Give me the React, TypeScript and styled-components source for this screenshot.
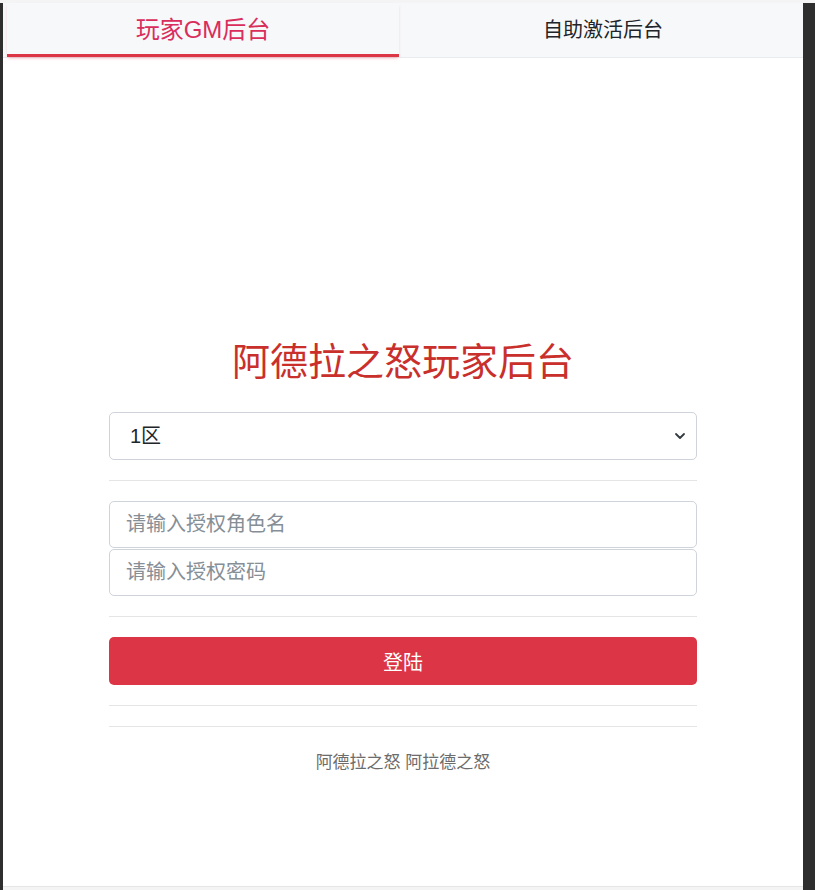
import styled, { createGlobalStyle } from 'styled-components';
import { useState } from 'react';

const GlobalStyle = createGlobalStyle`
    html, body {
        margin: 0;
        padding: 0;
        background: #f4f4f4;
    }
    * {
        box-sizing: border-box;
    }
    body {
        font-family: "Liberation Sans", "Noto Sans CJK SC", sans-serif;
        color: #212529;
    }
`;

const Page = styled.div`
    padding-top: 3px;
    height: 890px;
    display: flex;
    flex-direction: column;
`;
const Frame = styled.div`
    flex: 1;
    display: flex;
`;
const Side = styled.div<{ $width: number }>`
    width: ${props => props.$width}px;
    background-color: #2e2e2e;
`;
const Main = styled.main`
    flex: 1;
    background-color: #fff;
    border-bottom: 1px solid #e6e6e6;
    margin-bottom: 3px;
    display: flex;
    flex-direction: column;
`;
const TabBar = styled.nav`
    display: flex;
    gap: 8px;
    padding: 0 4px;
    height: 55px;
    background-color: #f7f8fa;
    border-bottom: 1px solid #e9ecef;
`;
const Tab = styled.button<{ $active: boolean }>`
    flex: 1;
    border: none;
    background: none;
    font-family: "Liberation Sans", "Noto Sans CJK SC", sans-serif;
    font-size: ${props => props.$active ? '24px' : '20px'};
    line-height: 1;
    color: ${props => props.$active ? '#d92e5c' : '#212529'};
    border-bottom: 3px solid ${props => props.$active ? '#dc3545' : 'transparent'};
    box-shadow: ${props => props.$active ? '0 2px 3px -1px rgba(220,53,69,.35)' : 'none'};
    padding: 2px 0 0;
    cursor: pointer;
`;
const Content = styled.section`
    width: 588px;
    margin: 0 auto;
    padding-top: 282px;
    display: flex;
    flex-direction: column;
`;
const Title = styled.h1`
    margin: 0 0 28px;
    text-align: center;
    font-size: 38px;
    font-weight: 400;
    line-height: 44px;
    color: #c9302c;
`;
const SelectWrap = styled.div`
    position: relative;
`;
const Select = styled.select`
    width: 100%;
    height: 48px;
    appearance: none;
    border: 1px solid #ced4da;
    border-radius: 5px;
    background: #fff;
    padding: 0 40px 0 20px;
    font-family: "Liberation Sans", "Noto Sans CJK SC", sans-serif;
    font-size: 20px;
    color: #212529;
    outline: none;
`;
const Chevron = styled.svg`
    position: absolute;
    right: 5px;
    top: 18px;
    pointer-events: none;
`;
const Divider = styled.hr<{ $flush?: boolean }>`
    border: none;
    border-top: 1px solid #e5e5e5;
    margin: ${props => props.$flush ? '0 0 20px' : '20px 0'};
`;
const Input = styled.input`
    width: 100%;
    height: 47px;
    border: 1px solid #ced4da;
    border-radius: 5px;
    padding: 0 16px;
    font-family: "Liberation Sans", "Noto Sans CJK SC", sans-serif;
    font-size: 20px;
    color: #212529;
    outline: none;
    & + & {
        margin-top: 1px;
    }
    &::placeholder {
        color: #868e96;
    }
`;
const Button = styled.button`
    width: 100%;
    height: 48px;
    border: none;
    border-radius: 5px;
    background-color: #dc3545;
    color: #fff;
    font-family: "Liberation Sans", "Noto Sans CJK SC", sans-serif;
    font-size: 20px;
    cursor: pointer;
`;
const Footer = styled.p`
    margin: 4px 0 0;
    text-align: center;
    font-size: 17px;
    line-height: 24px;
    color: #6c6c6c;
`;

function App() {
    const [tab, setTab] = useState(0);
    return (
        <Page>
            <GlobalStyle />
            <Frame>
                <Side $width={3} />
                <Main>
                    <TabBar>
                        <Tab $active={tab === 0} onClick={() => setTab(0)}>玩家GM后台</Tab>
                        <Tab $active={tab === 1} onClick={() => setTab(1)}>自助激活后台</Tab>
                    </TabBar>
                    <Content>
                        <Title>阿德拉之怒玩家后台</Title>
                        <SelectWrap>
                            <Select defaultValue="1">
                                <option value="1">1区</option>
                                <option value="2">2区</option>
                            </Select>
                            <Chevron width="24" height="12" viewBox="0 0 24 12">
                                <path d="M8 4l4 4 4-4" fill="none" stroke="#343a40" strokeWidth="1.8" strokeLinecap="round" strokeLinejoin="round" />
                            </Chevron>
                        </SelectWrap>
                        <Divider />
                        <Input placeholder="请输入授权角色名" />
                        <Input type="password" placeholder="请输入授权密码" />
                        <Divider />
                        <Button>登陆</Button>
                        <Divider />
                        <Divider $flush />
                        <Footer>阿德拉之怒 阿拉德之怒</Footer>
                    </Content>
                </Main>
                <Side $width={12} />
            </Frame>
        </Page>
    );
}

export default App;
